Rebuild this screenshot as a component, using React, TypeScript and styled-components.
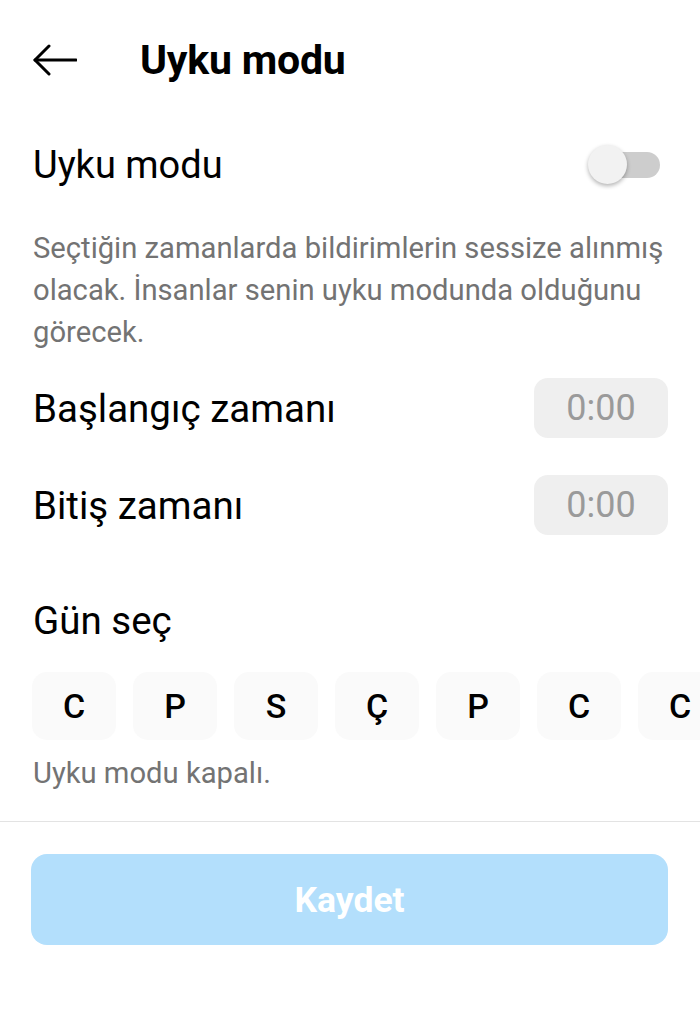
import React from "react";
import styled, { createGlobalStyle } from "styled-components";

const Global = createGlobalStyle`
  html, body { margin: 0; padding: 0; background: #fff; }
  body { font-family: Roboto, "Noto Sans", sans-serif; color: #000; overflow: hidden; }
  * { box-sizing: border-box; }
`;

const Page = styled.div`
  width: 700px;
  height: 1024px;
  overflow: hidden;
  background: #fff;
`;

const Header = styled.header`
  height: 120px;
  display: flex;
  align-items: center;
  padding-left: 33px;
  gap: 63px;
`;

const BackIcon = styled.svg`
  width: 44px;
  height: 32px;
  display: block;
`;

const Title = styled.h1`
  margin: 0;
  font-size: 41px;
  font-weight: 700;
  letter-spacing: -0.2px;
  color: #000;
`;

const Content = styled.div`
  padding: 0 32px 0 33px;
`;

const Row = styled.div<{ $h: number; $mt?: number }>`
  height: ${(p) => p.$h}px;
  margin-top: ${(p) => p.$mt ?? 0}px;
  display: flex;
  align-items: center;
  justify-content: space-between;
`;

const Label = styled.span<{ $size?: number }>`
  font-size: ${(p) => p.$size ?? 38.5}px;
  font-weight: 400;
  color: #000;
`;

const Toggle = styled.div`
  position: relative;
  width: 72px;
  height: 40px;
  margin-right: 8px;
  display: flex;
  align-items: center;
  justify-content: flex-end;
`;

const Track = styled.div`
  width: 64px;
  height: 26px;
  border-radius: 13px;
  background: #cdcdcd;
`;

const Knob = styled.div`
  position: absolute;
  left: 0;
  top: 0;
  width: 39px;
  height: 39px;
  border-radius: 50%;
  background: #f2f2f2;
  box-shadow: 0 2px 4px rgba(0, 0, 0, 0.3);
`;

const Description = styled.p`
  margin: 17px 0 0;
  font-size: 29.2px;
  line-height: 42px;
  color: #737373;
`;

const TimePill = styled.div`
  width: 134px;
  height: 60px;
  border-radius: 14px;
  background: #efefef;
  display: flex;
  align-items: center;
  justify-content: center;
  font-size: 36px;
  color: #9a9a9a;
`;

const Days = styled.div`
  margin-top: 22px;
  margin-left: -1px;
  display: flex;
  gap: 17px;
  width: 760px;
`;

const Day = styled.div`
  flex: 0 0 84px;
  height: 68px;
  border-radius: 15px;
  background: #fafafa;
  display: flex;
  align-items: center;
  justify-content: center;
  font-size: 34px;
  font-weight: 500;
  color: #000;
`;

const Status = styled.div`
  margin-top: 15px;
  height: 36px;
  line-height: 36px;
  font-size: 29.2px;
  color: #737373;
`;

const Divider = styled.hr`
  margin: 30px 0 0;
  border: none;
  height: 1px;
  background: #e3e3e3;
`;

const Footer = styled.div`
  padding: 32px 32px 0 31px;
`;

const SaveButton = styled.button`
  width: 100%;
  height: 91px;
  border: none;
  border-radius: 16px;
  background: #b3dffc;
  color: #fff;
  font-family: Roboto, sans-serif;
  font-size: 35.5px;
  font-weight: 700;
`;

const days = ["C", "P", "S", "Ç", "P", "C", "C"];

export default function App() {
  return (
    <Page>
      <Global />
      <Header>
        <BackIcon viewBox="0 0 44 32" fill="none" stroke="#000" strokeWidth="3" strokeLinecap="round" strokeLinejoin="round">
          <path d="M2 16H43" />
          <path d="M16 2L2 16L16 30" />
        </BackIcon>
        <Title>Uyku modu</Title>
      </Header>
      <Content>
        <Row $h={90}>
          <Label $size={38}>Uyku modu</Label>
          <Toggle>
            <Track />
            <Knob />
          </Toggle>
        </Row>
        <Description>
          Seçtiğin zamanlarda bildirimlerin sessize alınmış olacak. İnsanlar senin uyku modunda olduğunu görecek.
        </Description>
        <Row $h={60} $mt={25}>
          <Label>Başlangıç zamanı</Label>
          <TimePill>0:00</TimePill>
        </Row>
        <Row $h={60} $mt={37}>
          <Label>Bitiş zamanı</Label>
          <TimePill>0:00</TimePill>
        </Row>
        <Row $h={60} $mt={55}>
          <Label>Gün seç</Label>
        </Row>
        <Days>
          {days.map((d, i) => (
            <Day key={i}>{d}</Day>
          ))}
        </Days>
        <Status>Uyku modu kapalı.</Status>
      </Content>
      <Divider />
      <Footer>
        <SaveButton>Kaydet</SaveButton>
      </Footer>
    </Page>
  );
}
